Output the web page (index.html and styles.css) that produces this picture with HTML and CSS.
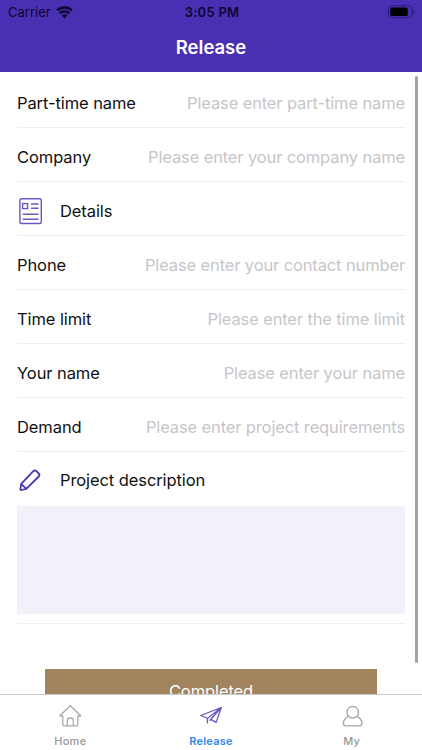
FILE: index.html
```html
<!DOCTYPE html>
<html lang="en">
<head>
<meta charset="utf-8">
<title>Release</title>
<link rel="stylesheet" href="styles.css">
</head>
<body>
<div class="app">
  <header class="header">
    <div class="status">
      <div class="carrier"><span>Carrier</span>
        <svg width="17" height="13" viewBox="0 0 17 13" fill="none" stroke="currentColor" stroke-width="2.4"><path d="M1.1 4.4a10.7 10.7 0 0 1 14.8 0M3.7 7.4a6.8 6.8 0 0 1 9.6 0"/><path d="M5.7 9.5a3.9 3.9 0 0 1 5.6 0L8.5 12.4z" fill="currentColor" stroke="none"/></svg>
      </div>
      <div class="time">3:05 PM</div>
      <svg class="battery" width="28" height="14" viewBox="0 0 28 14"><rect x=".6" y=".9" width="23.6" height="11.8" rx="3.2" fill="none" stroke="#2b1b78"/><rect x="2.3" y="2.6" width="17.4" height="8.4" rx="1.6" fill="#000"/><path d="M25.4 4.8q2 2 0 4z" fill="#2b1b78"/></svg>
    </div>
    <h1 class="title">Release</h1>
  </header>
  <main class="content">
    <form class="form">
      <div class="row"><span class="label">Part-time name</span><span class="hint">Please enter part-time name</span></div>
      <div class="row"><span class="label">Company</span><span class="hint">Please enter your company name</span></div>
      <div class="row"><svg class="icon" width="26" height="28" viewBox="0 0 26 28" fill="none" stroke="#6b58c2" stroke-width="1.4"><rect x="2.9" y="1.7" width="21.4" height="24.8" rx="1.8"/><rect x="5.6" y="6.6" width="5" height="5"/><path d="M14 7h7.5M14 11.2h7.5M5.7 17.2h15.8M5.7 22.2h15.8"/></svg><span class="label">Details</span></div>
      <div class="row"><span class="label">Phone</span><span class="hint">Please enter your contact number</span></div>
      <div class="row"><span class="label">Time limit</span><span class="hint">Please enter the time limit</span></div>
      <div class="row"><span class="label">Your name</span><span class="hint">Please enter your name</span></div>
      <div class="row"><span class="label">Demand</span><span class="hint">Please enter project requirements</span></div>
      <div class="description">
        <div class="description-head"><svg class="icon" width="26" height="28" viewBox="0 0 26 28" fill="none" stroke="#4e35b2" stroke-width="1.8" stroke-linejoin="round"><path d="M4.2 17.8 16.3 5.2q1.6-1.5 3.1 0l2.3 2.3q1.5 1.5 0 3L9.3 22.8 4.5 24q-1.3.2-1.1-1.1zM4.2 17.8l5.1 5"/></svg><span class="label">Project description</span></div>
        <div class="textarea"></div>
      </div>
      <div class="submit">Completed</div>
    </form>
    <div class="scrollbar"></div>
  </main>
  <nav class="tabs">
    <div class="tab"><svg width="24" height="24" viewBox="0 0 24 24" fill="none" stroke="#aaa" stroke-width="1.3" stroke-linejoin="round"><path d="M12.3 1.8 2.3 11.2q-.5.8.5.8h2v8.8q0 1 1 1h13q1 0 1-1V12h2q1 0 .5-.8zM9.3 21.6v-5.2q0-2.4 3-2.4t3 2.4v5.2"/></svg><span>Home</span></div>
    <div class="tab active"><svg width="24" height="24" viewBox="0 0 24 24" fill="none" stroke="#6a54c2" stroke-width="1.3" stroke-linejoin="round" stroke-linecap="round"><path d="M7.6 14 1.7 11.5 22.3 3.5 17.2 18.4 12.2 15.6M22.3 3.5 8.4 14.4v4.4M22.3 3.5 11 16.2"/></svg><span>Release</span></div>
    <div class="tab"><svg width="24" height="24" viewBox="0 0 24 24" fill="none" stroke="#a5a5a5" stroke-width="1.3"><circle cx="12.8" cy="8.2" r="5.8"/><path d="M8.2 12.4q-4.8 3-4.8 6.8 0 2.6 2.6 2.6h13.4q2.6 0 2.6-2.6 0-3.8-4.8-6.8"/></svg><span>My</span></div>
  </nav>
</div>
</body>
</html>
```
FILE: styles.css
```css
* { box-sizing: border-box; }
body { margin: 0; background: #fff; color: #111; font-family: Inter, "Liberation Sans", sans-serif; }
.app { display: flex; flex-direction: column; width: 422px; height: 750px; overflow: hidden; }
.header { flex: none; height: 72px; background: #4930b3; }
.status { display: grid; grid-template-columns: 1fr auto 1fr; align-items: center; height: 24px; padding: 0 6px 0 8px; color: #0d0630; font-size: 13px; }
.carrier { display: flex; align-items: center; gap: 5px; }
.time { font-weight: 600; letter-spacing: .25px; }
.battery { justify-self: end; margin-top: -1px; }
.title { margin: 0; color: #fff; text-align: center; font-size: 18.5px; font-weight: 600; line-height: 47px; }
.content { position: relative; flex: 1; min-height: 0; overflow: hidden; }
.form { padding: 2px 17px 0; }
.row { display: flex; align-items: center; height: 54px; padding-top: 5px; border-bottom: 1px solid #ededf0; font-size: 16.5px; white-space: nowrap; }
.label { font-size: 16.5px; letter-spacing: -.09px; }
.hint { margin-left: auto; color: #c6c6c9; letter-spacing: -.13px; }
.icon { flex: none; margin-right: 17px; }
.description { height: 172px; border-bottom: 1px solid #ededf3; }
.description-head { display: flex; align-items: center; height: 54px; padding-top: 1px; }
.textarea { height: 108px; background: #f2f0f8; }
.submit { width: 332px; height: 46px; margin: 45px 0 0 28px; background: #a1845e; color: #fff; font-size: 16.5px; line-height: 45px; letter-spacing: -.1px; text-align: center; }
.scrollbar { position: absolute; top: 4px; right: 4px; width: 3px; height: 587px; border-radius: 2px; background: #a2a2a2; }
.tabs { flex: none; display: grid; grid-template-columns: repeat(3, 1fr); height: 56px; border-top: 1px solid #cbcbcd; background: #fff; }
.tab { display: flex; flex-direction: column; align-items: center; padding-top: 9px; gap: 6px; color: #999; font-size: 11px; font-weight: 500; line-height: 14px; letter-spacing: .25px; }
.active { color: #2f86ee; font-weight: 600; }
```
